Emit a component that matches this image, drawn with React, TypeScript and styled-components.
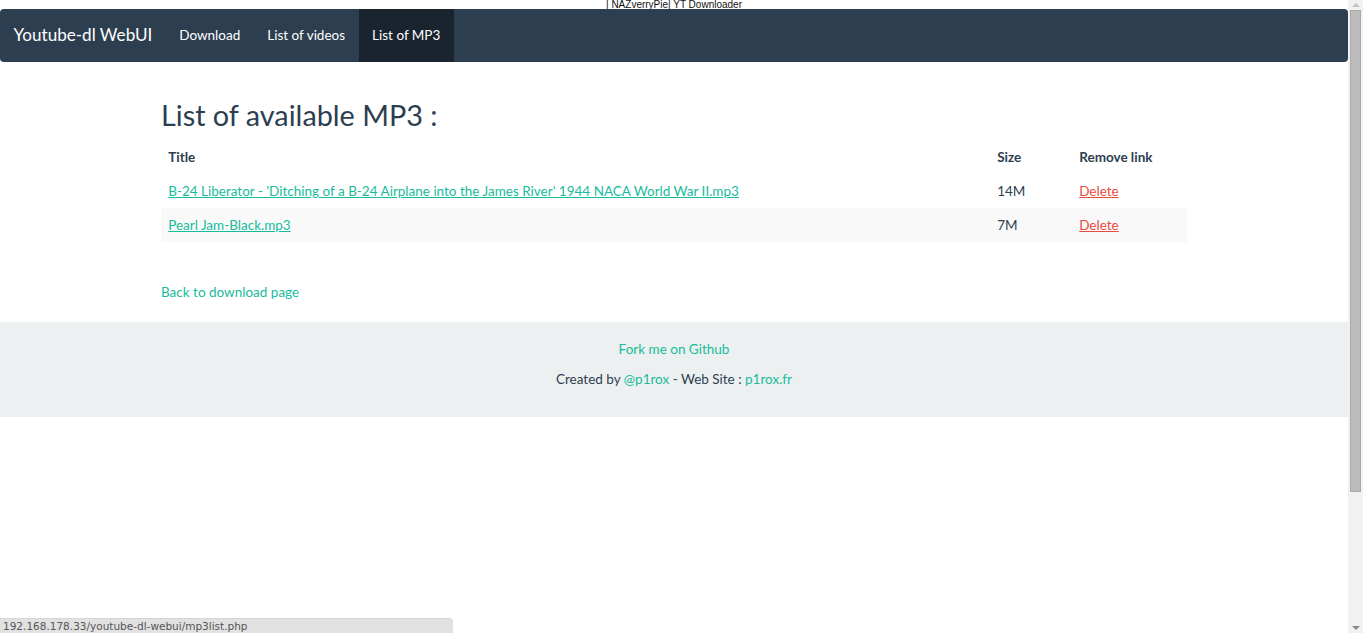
import React from "react";
import styled, { createGlobalStyle } from "styled-components";

const Global = createGlobalStyle`
  html, body { margin: 0; padding: 0; height: 100%; overflow: hidden; background: #fff; }
  body { font-family: Lato, "Noto Sans", sans-serif; font-size: 13.5px; line-height: 1.428571; color: #2c3e50; }
  #root { height: 100%; }
`;

const Screen = styled.div`
  display: flex;
  height: 633px;
  width: 1363px;
  position: relative;
  overflow: hidden;
`;

const Page = styled.div`
  width: 1348px;
  display: flex;
  flex-direction: column;
`;

const TitleStrip = styled.div`
  height: 9px;
  text-align: center;
  font-family: "Liberation Sans", Arial, sans-serif;
  font-size: 10px;
  line-height: 9px;
  color: #111;
  white-space: pre;
`;

const NavBar = styled.nav`
  height: 53px;
  background: #2c3e50;
  border-radius: 4px;
  display: flex;
  align-items: stretch;
  margin-bottom: 19px;
`;

const Brand = styled.a`
  display: flex;
  align-items: center;
  padding: 0 13.5px;
  font-size: 17.1px;
  color: #fff;
  text-decoration: none;
`;

const NavItem = styled.a<{ $active?: boolean }>`
  display: flex;
  align-items: center;
  padding: 0 13.5px;
  color: #fff;
  text-decoration: none;
  background: ${(p) => (p.$active ? "#1a242f" : "transparent")};
`;

const Container = styled.div`
  width: 1026px;
  margin: 0 auto;
`;

const Heading = styled.h2`
  font-size: 28.8px;
  font-weight: 400;
  line-height: 1.1;
  margin: 19px 0 9.5px;
  color: #2c3e50;
`;

const Table = styled.table`
  width: 100%;
  table-layout: fixed;
  border-collapse: collapse;
  margin-bottom: 19px;
`;

const Th = styled.th<{ $w?: string }>`
  box-sizing: border-box;
  text-align: left;
  font-weight: 700;
  padding: 7.2px;
  vertical-align: bottom;
  width: ${(p) => p.$w || "auto"};
`;

const Tr = styled.tr<{ $striped?: boolean }>`
  background: ${(p) => (p.$striped ? "#f9f9f9" : "transparent")};
`;

const Td = styled.td`
  padding: 7.2px;
  vertical-align: top;
  white-space: nowrap;
`;

const Link = styled.a<{ $danger?: boolean; $plain?: boolean }>`
  color: ${(p) => (p.$danger ? "#e74c3c" : "#18bc9c")};
  text-decoration: ${(p) => (p.$plain ? "none" : "underline")};
  cursor: pointer;
`;

const BackPara = styled.p`
  margin: 41px 0 20px;
`;

const Footer = styled.footer`
  background: #ecf0f1;
  padding: 18px 0 17px;
  text-align: center;
`;

const FooterLine = styled.p`
  margin: 0 0 10.5px;
`;

const ScrollBar = styled.div`
  width: 15px;
  background: #f1f1f1;
  display: flex;
  flex-direction: column;
  align-items: center;
`;

const Arrow = styled.div<{ $down?: boolean }>`
  height: 10px;
  width: 100%;
  display: flex;
  align-items: center;
  justify-content: center;
  &::before {
    content: "";
    border-left: 4px solid transparent;
    border-right: 4px solid transparent;
    ${(p) =>
      p.$down
        ? "border-top: 4px solid #8a8a8a;"
        : "border-bottom: 4px solid #c4c4c4;"}
  }
`;

const Thumb = styled.div`
  width: 11px;
  height: 482px;
  background: #bcbcbc;
  border: 1px solid #a9a9a9;
  box-sizing: border-box;
`;

const Spacer = styled.div`
  flex: 1;
`;

const StatusBar = styled.div`
  position: absolute;
  left: 0;
  bottom: 0;
  width: 453px;
  height: 15px;
  background: #e1e1e1;
  border-top-right-radius: 4px;
  border-top: 1px solid #d6d6d6;
  box-sizing: border-box;
  font-family: "DejaVu Sans", "Liberation Sans", sans-serif;
  font-size: 10.5px;
  line-height: 14px;
  color: #555;
  padding-left: 3px;
  white-space: nowrap;
`;

const rows = [
  {
    title: "B-24 Liberator - 'Ditching of a B-24 Airplane into the James River' 1944 NACA World War II.mp3",
    size: "14M",
  },
  { title: "Pearl Jam-Black.mp3", size: "7M" },
];

export default function App() {
  return (
    <Screen>
      <Global />
      <Page>
        <TitleStrip>{"| NAZverryPie| YT Downloader"}</TitleStrip>
        <NavBar>
          <Brand>Youtube-dl WebUI</Brand>
          <NavItem>Download</NavItem>
          <NavItem>List of videos</NavItem>
          <NavItem $active>List of MP3</NavItem>
        </NavBar>
        <Container>
          <Heading>List of available MP3 :</Heading>
          <Table>
            <thead>
              <tr>
                <Th>Title</Th>
                <Th $w="82px">Size</Th>
                <Th $w="115px">Remove link</Th>
              </tr>
            </thead>
            <tbody>
              {rows.map((r, i) => (
                <Tr key={r.title} $striped={i % 2 === 1}>
                  <Td>
                    <Link>{r.title}</Link>
                  </Td>
                  <Td>{r.size}</Td>
                  <Td>
                    <Link $danger>Delete</Link>
                  </Td>
                </Tr>
              ))}
            </tbody>
          </Table>
          <BackPara>
            <Link $plain>Back to download page</Link>
          </BackPara>
        </Container>
        <Footer>
          <FooterLine>
            <Link $plain>Fork me on Github</Link>
          </FooterLine>
          <FooterLine>
            Created by <Link $plain>@p1rox</Link> - Web Site : <Link $plain>p1rox.fr</Link>
          </FooterLine>
        </Footer>
      </Page>
      <ScrollBar>
        <Arrow />
        <Thumb />
        <Spacer />
        <Arrow $down />
      </ScrollBar>
      <StatusBar>192.168.178.33/youtube-dl-webui/mp3list.php</StatusBar>
    </Screen>
  );
}
